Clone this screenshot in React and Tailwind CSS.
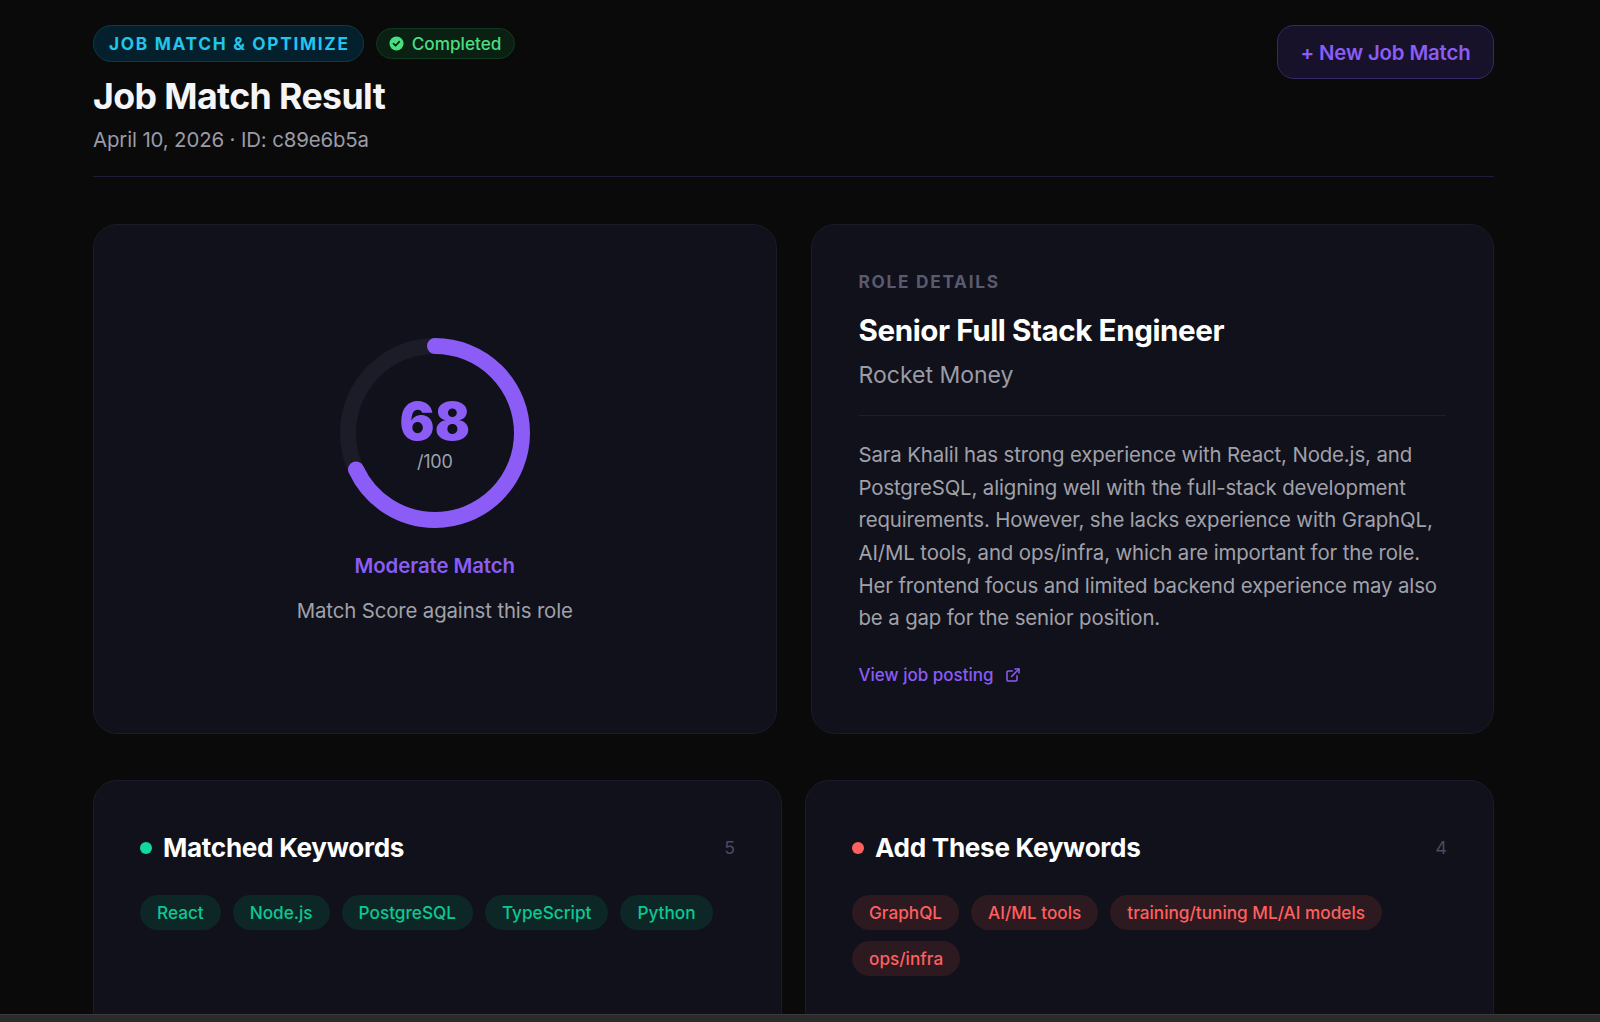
import React from "react";
import { ExternalLink } from "lucide-react";

const matched = ["React", "Node.js", "PostgreSQL", "TypeScript", "Python"];
const missing = ["GraphQL", "AI/ML tools", "training/tuning ML/AI models", "ops/infra"];

function ScoreRing({ score }) {
	const r = 87;
	const circ = 2 * Math.PI * r;
	return (
		<div className="relative w-[190px] h-[190px]">
			<svg width="190" height="190" viewBox="0 0 190 190" className="-rotate-90">
				<circle cx="95" cy="95" r={r} fill="none" stroke="#1c1c28" strokeWidth="16" />
				<circle
					cx="95"
					cy="95"
					r={r}
					fill="none"
					stroke="#8b5cf6"
					strokeWidth="16"
					strokeLinecap="round"
					strokeDasharray={`${(circ * score) / 100} ${circ}`}
				/>
			</svg>
			<div className="absolute inset-0 pt-[5px] flex flex-col items-center justify-center">
				<span className="text-[52px] leading-[51px] font-black text-[#8b5cf6] mb-[2px]">{score}</span>
				<span className="text-[18px] leading-[26px] tracking-[-0.2px] text-[#9ca3af]">/100</span>
			</div>
		</div>
	);
}

function KeywordCard({ title, count, dot, chip, items }) {
	return (
		<div className="bg-[#10111a] border border-[#1b1b29] rounded-[24px] px-[46px] pt-[48px] h-[300px]">
			<div className="flex items-center justify-between mb-[28px]">
				<div className="flex items-center gap-[11px]">
					<span className={`w-3 h-3 rounded-full ${dot}`} />
					<h3 className="text-[26.1px] leading-[38px] font-bold text-white tracking-[-0.3px]">{title}</h3>
				</div>
				<span className="text-[17.8px] text-[#4b4b5e]">{count}</span>
			</div>
			<div className="flex flex-wrap gap-x-3 gap-y-[11px]">
				{items.map((k) => (
					<span key={k} className={`h-[35px] px-[17px] rounded-full flex items-center text-[17.2px] font-medium ${chip}`}>
						{k}
					</span>
				))}
			</div>
		</div>
	);
}

export default function App() {
	return (
		<div className="h-screen flex flex-col overflow-hidden bg-[#0a0a0b] font-['Inter',sans-serif]">
			<main className="flex-1 min-h-0 overflow-hidden pl-[93px] pr-[106px] pt-[25px]">
				{/* Header */}
				<header className="flex items-start justify-between pb-[21px] border-b border-[#1f1c38]">
					<div>
						<div className="flex items-center gap-3">
							<span className="h-[37px] pl-[15px] pr-[13px] flex items-center rounded-full bg-[#04202c] border border-[#0b3a4a] text-[#22c5ee] text-[17.3px] font-bold tracking-[1.7px]">
								JOB MATCH &amp; OPTIMIZE
							</span>
							<span className="h-[31px] pl-[12px] pr-[13px] flex items-center gap-[8px] rounded-full bg-[#0a2013] border border-[#123a20] text-[#4ade80] text-[17.2px] font-medium">
								<svg width="15" height="15" viewBox="0 0 16 16">
									<circle cx="8" cy="8" r="7.5" fill="#4ade80" />
									<path d="M4.8 8.2l2.2 2.2 4-4.4" fill="none" stroke="#0a2013" strokeWidth="1.8" strokeLinecap="round" strokeLinejoin="round" />
								</svg>
								Completed
							</span>
						</div>
						<h1 className="mt-[9px] text-[35.7px] leading-[50px] font-bold text-[#f5f5f7] tracking-[-0.6px]">Job Match Result</h1>
						<p className="mt-[4px] text-[20.4px] leading-[30px] tracking-[-0.13px] text-[#9b9ba6]">April 10, 2026 · ID: c89e6b5a</p>
					</div>
					<button className="w-[217px] h-[54px] pt-[2px] rounded-[17px] bg-[#17122a] border border-[#35286b] text-[#8b5cf6] text-[20.4px] tracking-[-0.15px] font-semibold">
						+ New Job Match
					</button>
				</header>

				{/* Score and role */}
				<section className="grid grid-cols-2 gap-[34px] mt-[47px]">
					<div className="h-[510px] pt-[6px] bg-[#10111a] border border-[#1b1b29] rounded-[24px] flex flex-col items-center justify-center">
						<ScoreRing score={68} />
						<div className="mt-[23px] text-[20.4px] leading-[30px] tracking-[-0.1px] font-semibold text-[#8b5cf6]">Moderate Match</div>
						<div className="mt-[15px] text-[20.4px] leading-[30px] tracking-[-0.13px] text-[#a1a1aa]">Match Score against this role</div>
					</div>
					<div className="h-[510px] bg-[#10111a] border border-[#1b1b29] rounded-[24px] px-[47px] pt-[46px]">
						<div className="text-[17.3px] leading-[22px] font-bold tracking-[1.7px] text-[#5a5a6e]">ROLE DETAILS</div>
						<h2 className="mt-[15px] text-[29.6px] leading-[44px] font-bold text-white tracking-[-0.42px]">Senior Full Stack Engineer</h2>
						<div className="mt-[3px] text-[23px] leading-[40px] text-[#9b9ba6] pb-[20px] border-b border-[#1f1c38]">Rocket Money</div>
						<p className="mt-[23px] text-[20.4px] leading-[32.65px] tracking-[-0.13px] text-[#a1a1aa]">
							Sara Khalil has strong experience with React, Node.js, and PostgreSQL, aligning well with the full-stack development requirements. However, she lacks experience with GraphQL, AI/ML tools, and ops/infra, which are important for the role. Her frontend focus and limited backend experience may also be a gap for the senior position.
						</p>
						<a className="mt-[27px] flex items-center gap-[11px] text-[17px] leading-[26px] font-medium text-[#8b5cf6]">
							View job posting
							<ExternalLink size={16} strokeWidth={2.3} />
						</a>
					</div>
				</section>

				{/* Keywords */}
				<section className="grid grid-cols-2 gap-[23px] mt-[46px]">
					<KeywordCard title="Matched Keywords" count={5} dot="bg-[#10d9a0]" chip="bg-[#0c2725] text-[#0cc894]" items={matched} />
					<KeywordCard title="Add These Keywords" count={4} dot="bg-[#ff6161]" chip="bg-[#2c1a20] text-[#ff5f5f]" items={missing} />
				</section>
			</main>
			<div className="h-2 shrink-0 bg-[#2b2b2b] border-t border-[#3b3b3b]" />
		</div>
	);
}
